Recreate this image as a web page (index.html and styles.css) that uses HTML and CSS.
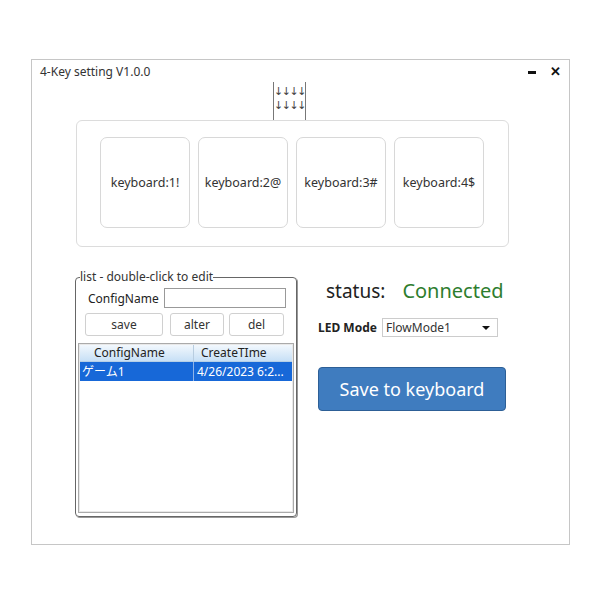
FILE: index.html
```html
<!DOCTYPE html>
<html lang="en">
<head>
    <meta charset="UTF-8">
    <title>4-Key setting</title>
    <link rel="stylesheet" href="styles.css">
</head>
<body>
    <div class="window">
        <div class="title-bar">
            <span class="title">4-Key setting V1.0.0</span>
            <div class="window-controls">
                <span class="min-btn"></span>
                <span class="close-btn">&#x2715;</span>
            </div>
        </div>

        <!-- little arrows logo above the keys -->
        <div class="logo">
            <div class="arrows">↓↓↓↓<br>↓↓↓↓</div>
        </div>

        <div class="key-panel">
            <div class="key">keyboard:1!</div>
            <div class="key">keyboard:2@</div>
            <div class="key">keyboard:3#</div>
            <div class="key">keyboard:4$</div>
        </div>

        <div class="bottom">
            <fieldset class="config-list">
                <legend>list - double-click to edit</legend>
                <div class="name-row">
                    <label>ConfigName</label>
                    <input type="text" class="name-input">
                </div>
                <div class="btn-row">
                    <button class="small-btn save-btn">save</button>
                    <button class="small-btn alter-btn">alter</button>
                    <button class="small-btn del-btn">del</button>
                </div>
                <div class="list-view">
                    <div class="list-head">
                        <div class="col col-name">ConfigName</div>
                        <div class="col col-time">CreateTIme</div>
                    </div>
                    <div class="list-row selected">
                        <div class="col col-name">ゲーム1</div>
                        <div class="col col-time">4/26/2023 6:2...</div>
                    </div>
                </div>
            </fieldset>

            <div class="side">
                <div class="status">
                    <span class="status-label">status:</span>
                    <span class="status-value">Connected</span>
                </div>
                <div class="led-row">
                    <span class="led-label">LED Mode</span>
                    <div class="select">
                        <span>FlowMode1</span>
                        <span class="caret"></span>
                    </div>
                </div>
                <button class="save-keyboard">Save to keyboard</button>
            </div>
        </div>
    </div>
</body>
</html>
```

FILE: styles.css
```css
body, html {
    margin: 0;
    padding: 0;
    background: #fff;
    font-family: 'Noto Sans', 'Noto Sans CJK JP', sans-serif;
    color: #222;
}
* {
    box-sizing: border-box;
}
.window {
    margin: 59px 0 0 31px;
    width: 539px;
    height: 486px;
    border: 1px solid #c6c6c6;
    background: #fff;
}
.title-bar {
    height: 22px;
    display: flex;
    align-items: center;
    justify-content: space-between;
    padding: 0 8px;
}
.title {
    font-size: 12px;
    color: #333;
}
.window-controls {
    display: flex;
    align-items: center;
    gap: 14px;
}
.min-btn {
    width: 8px;
    height: 3px;
    background: #111;
    margin-top: 2px;
}
.close-btn {
    font-size: 13px;
    font-weight: bold;
    color: #111;
}
.logo {
    height: 38px;
    margin-left: 241px;
    display: flex;
}
.arrows {
    width: 33px;
    border-left: 1px solid #777;
    border-right: 1px solid #777;
    font-family: 'DejaVu Sans', sans-serif;
    font-size: 11px;
    line-height: 14px;
    letter-spacing: -1.5px;
    text-align: center;
    padding-top: 3px;
    color: #444;
}
.key-panel {
    margin-left: 44px;
    width: 433px;
    height: 127px;
    border: 1px solid #dcdcdc;
    border-radius: 6px;
    padding: 16px 0 0 23px;
    display: flex;
    gap: 8px;
}
.key {
    width: 90px;
    height: 91px;
    border: 1px solid #d8d8d8;
    border-radius: 7px;
    display: flex;
    align-items: center;
    justify-content: center;
    font-size: 12.5px;
    color: #333;
}
.bottom {
    display: flex;
    margin-top: 24px;
    margin-left: 43px;
}
.config-list {
    margin: 0;
    width: 222px;
    height: 246px;
    border: 1px solid #666;
    border-radius: 4px;
    padding: 0 2px 0 2px;
    box-shadow: 1px 1px 0 #999;
}
.config-list legend {
    font-size: 12px;
    color: #333;
    padding: 0;
    margin-left: 2px;
    line-height: 12px;
}
.name-row {
    display: flex;
    align-items: center;
    margin: 5px 0 0 10px;
}
.name-row label {
    font-size: 12px;
    color: #222;
    width: 76px;
}
.name-input {
    width: 122px;
    height: 20px;
    padding: 0;
    border: 1px solid #999;
    border-radius: 0;
}
.btn-row {
    display: flex;
    margin: 5px 0 0 7px;
}
.small-btn {
    height: 23px;
    background: #fff;
    border: 1px solid #d0d0d0;
    border-radius: 3px;
    font-family: inherit;
    font-size: 12px;
    color: #333;
    padding: 0;
}
.save-btn {
    width: 78px;
}
.alter-btn {
    width: 54px;
    margin-left: 7px;
}
.del-btn {
    width: 55px;
    margin-left: 5px;
}
.list-view {
    margin-top: 7px;
    height: 170px;
    border: 1px solid #aaa;
    box-shadow: inset 0 0 0 1px #e8e8e8;
    padding: 1px;
}
.list-head,
.list-row {
    display: flex;
    font-size: 12px;
}
.list-head {
    height: 17px;
    line-height: 16px;
    background: linear-gradient(#f2f8fd, #c7e0f6);
    border-bottom: 1px solid #b5cfe6;
    color: #222;
}
.list-row {
    height: 19px;
    line-height: 19px;
}
.list-row.selected {
    background: #1768d8;
    color: #fff;
}
.col-name {
    width: 114px;
    padding-left: 2px;
    border-right: 1px solid #b8cde0;
}
.list-head .col-name {
    padding-left: 14px;
}
.list-head .col-time {
    padding-left: 7px;
}
.list-row .col-name {
    border-right: 1px solid #8fb4e8;
}
.col-time {
    padding-left: 3px;
}
.side {
    margin-left: 21px;
    display: flex;
    flex-direction: column;
}
.status {
    margin: 6px 0 0 8px;
    font-size: 19px;
}
.status-label {
    color: #222;
}
.status-value {
    color: #2e7d2e;
    margin-left: 12px;
    font-size: 20px;
}
.led-row {
    display: flex;
    align-items: center;
    margin-top: 14px;
}
.led-label {
    font-size: 12px;
    font-weight: bold;
    width: 64px;
}
.select {
    width: 116px;
    height: 19px;
    border: 1px solid #ccc;
    display: flex;
    align-items: center;
    justify-content: space-between;
    padding: 0 0 0 3px;
    font-size: 12px;
    color: #333;
}
.caret {
    width: 0;
    height: 0;
    border-left: 4px solid transparent;
    border-right: 4px solid transparent;
    border-top: 4px solid #111;
    margin-right: 7px;
}
.save-keyboard {
    margin-top: 30px;
    width: 188px;
    height: 44px;
    background: #3f7cbf;
    border: 1px solid #2d5f96;
    border-radius: 4px;
    color: #fff;
    font-family: inherit;
    font-size: 18px;
}
```
